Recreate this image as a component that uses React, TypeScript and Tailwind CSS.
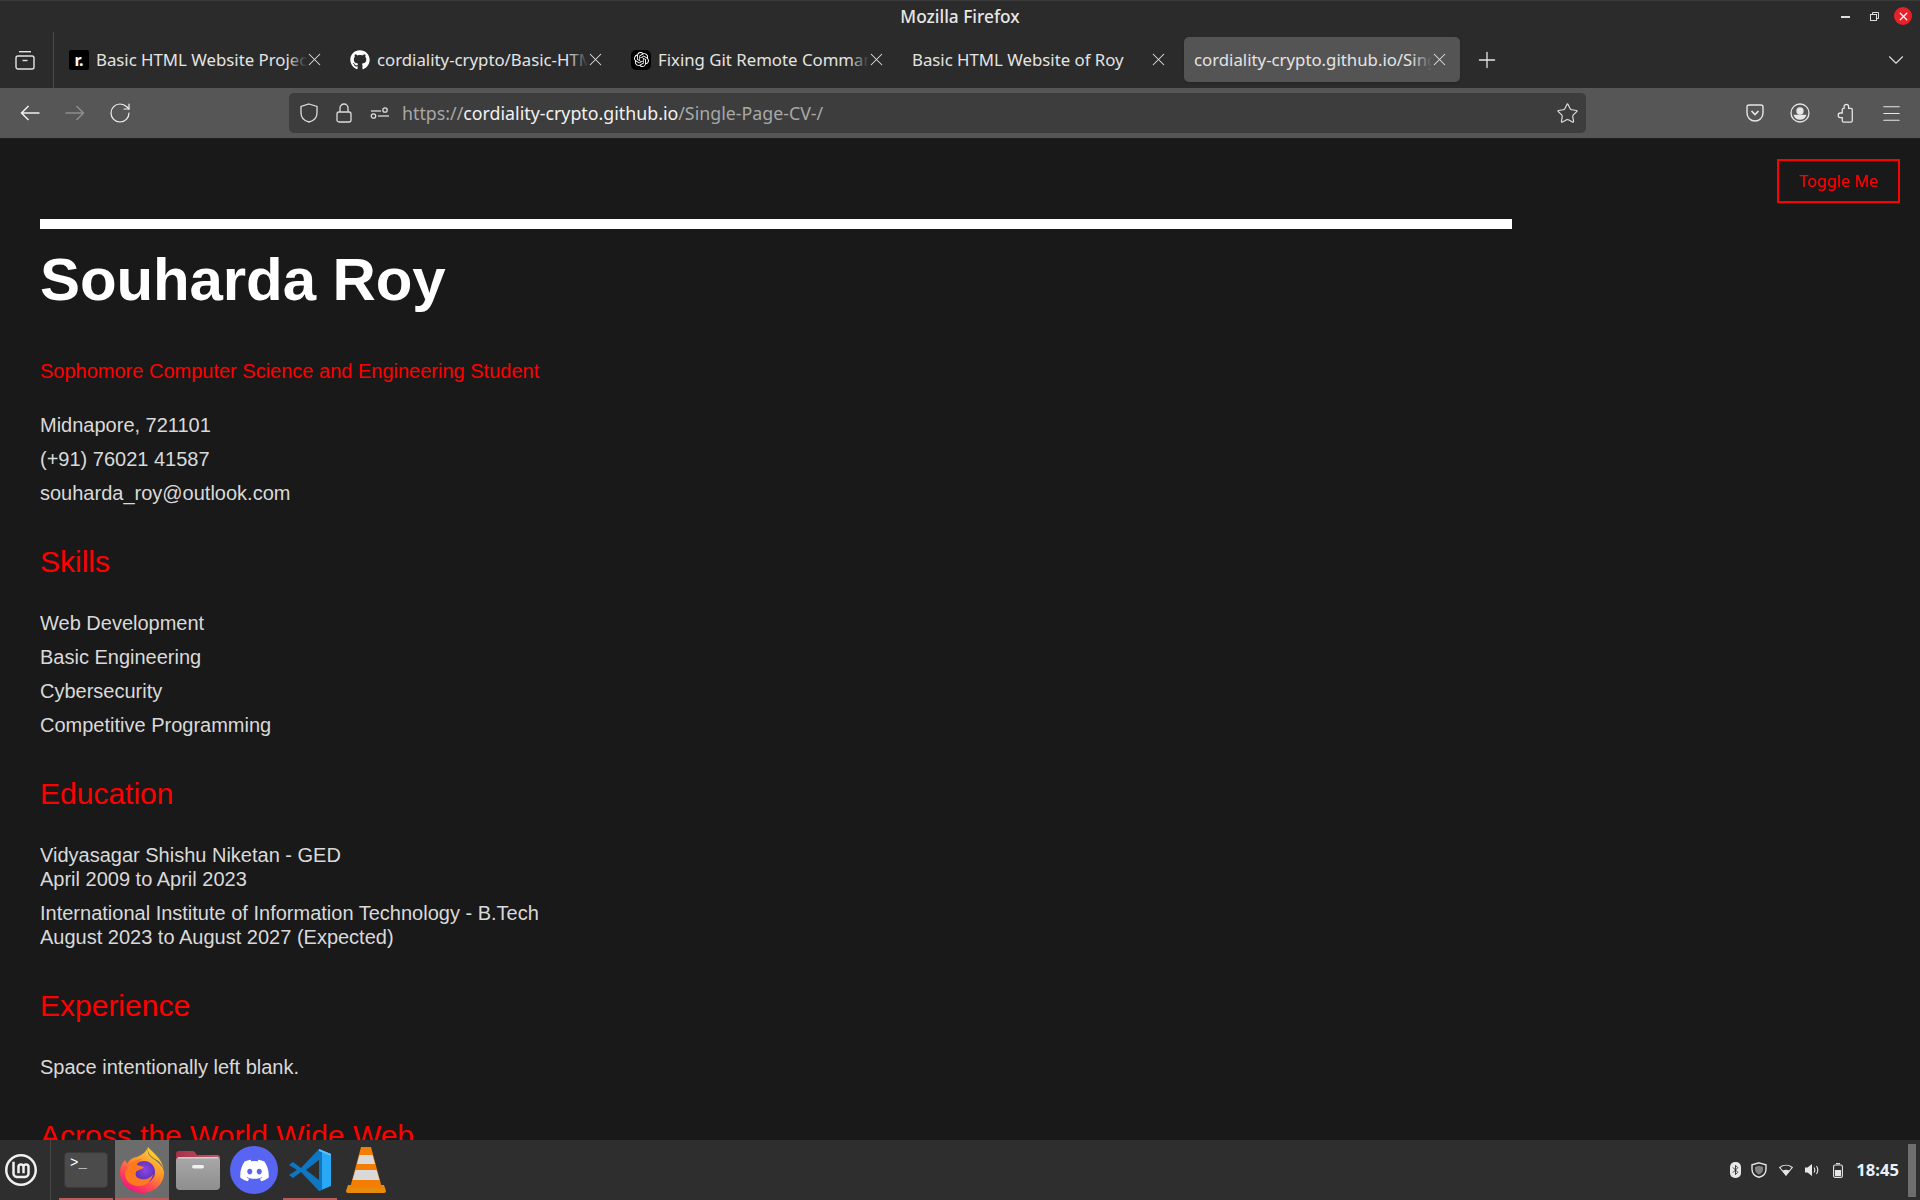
import React from "react";
import { FaGithub, FaDiscord } from "react-icons/fa";
import { SiLinuxmint, SiOpenai } from "react-icons/si";
import { RotateCw, Star, Menu, X, Plus, ChevronDown, Bluetooth } from "lucide-react";

const ui = "font-['Noto_Sans','Open_Sans',sans-serif]";

function Tab({ icon, title, active, width, fade }: { icon?: React.ReactNode; title: string; active?: boolean; width: number; fade?: boolean }) {
  return (
    <div className={`relative flex h-[45px] shrink-0 items-center rounded-[5px] pl-[10px] ${active ? "bg-[#545454] pr-[10px] shadow-sm" : "pr-[13px]"}`} style={{ width }}>
      {icon && <div className="mr-[7px] flex h-5 w-5 shrink-0 items-center justify-center">{icon}</div>}
      <div className="relative min-w-0 flex-1 overflow-hidden whitespace-nowrap text-[16.8px] leading-6 text-[#e4e4e4]">
        {title}
        {fade && <div className={`absolute right-0 top-0 h-full w-5 bg-gradient-to-r from-transparent ${active ? "to-[#545454]" : "to-[#2b2b2b]"}`} />}
      </div>
      <X className="ml-[-3px] h-[21px] w-[21px] shrink-0 text-[#e0e0e0]" strokeWidth={1.2} />
    </div>
  );
}

function Firefox() {
  return (
    <svg viewBox="0 0 44 46" className="h-[46px] w-[44px]">
      <defs>
        <linearGradient id="ff1" x1="0.85" y1="0" x2="0.25" y2="1">
          <stop offset="0" stopColor="#ffe13f" />
          <stop offset="0.45" stopColor="#ff8f2a" />
          <stop offset="0.78" stopColor="#ff3b5c" />
          <stop offset="1" stopColor="#e31587" />
        </linearGradient>
        <radialGradient id="ff2" cx="0.55" cy="0.4" r="0.65">
          <stop offset="0" stopColor="#8a47e8" />
          <stop offset="1" stopColor="#4f2aa8" />
        </radialGradient>
      </defs>
      <path d="M28 0c-1 4 0 8 4 11 7 5 12 9 12 15 0 11-10 20-22 20S0 37 0 26c0-6 2-10 5-13l2 4c2-4 6-7 10-7 4-2 9-4 11-10z" fill="url(#ff1)" />
      <circle cx="24" cy="25" r="11" fill="url(#ff2)" />
      <path d="M8 21c2-6 8-9 14-9-3 2-5 4-5 6l7 2c-2 3-6 2-8 5-1 3 0 6 5 7 5 1 10-1 12-5-1 7-7 12-14 12C10 39 5 33 5 27c0-2 1-4 3-6z" fill="#ff7a1f" />
      <path d="M28 0c4 5 16 12 16 26 0-6-3-11-9-14-5-3-8-7-7-12z" fill="#ffc72e" />
    </svg>
  );
}

function Folder() {
  return (
    <svg viewBox="0 0 44 40" className="h-[40px] w-[44px]">
      <defs>
        <linearGradient id="fo" x1="0" y1="0" x2="1" y2="0">
          <stop offset="0" stopColor="#a83048" />
          <stop offset="1" stopColor="#c2566a" />
        </linearGradient>
        <linearGradient id="fb" x1="0" y1="0" x2="0" y2="1">
          <stop offset="0" stopColor="#a8a8a8" />
          <stop offset="1" stopColor="#8e8e8e" />
        </linearGradient>
      </defs>
      <path d="M0 4a3 3 0 0 1 3-3h13c2 0 3 1 4 3l1 1h20a3 3 0 0 1 3 3v8H0z" fill="url(#fo)" />
      <rect x="0" y="7" width="44" height="33" rx="4" fill="url(#fb)" />
      <rect x="2" y="7" width="40" height="1.5" fill="#cfcfcf" />
      <rect x="16" y="15" width="12" height="3.5" rx="1.700" fill="#f0f0f0" />
    </svg>
  );
}

function VSCode() {
  return (
    <svg viewBox="0 0 42 42" className="h-[42px] w-[42px]">
      <path d="M30 0 42 5v32l-12 5z" fill="#28a8f5" />
      <path d="M30 0 12 19 4 13l-4 3 8 5-8 5 4 3 8-6 18 19 3-1V1z" fill="#0d77c4" />
      <path d="M30 11 17 21l13 10z" fill="#2e2e2e" />
      <path d="M30 0 42 5v2L30 2z" fill="#5cc1f7" />
    </svg>
  );
}

function Vlc() {
  return (
    <svg viewBox="0 0 40 46" className="h-[46px] w-[40px]">
      <path d="M2 38h36l2 6a2 2 0 0 1-2 2H2a2 2 0 0 1-2-2z" fill="#e88a0c" />
      <path d="M15 0h10l11 41H4z" fill="#f47d03" />
      <path d="M13.500 8h13l2.500 9H11z" fill="#d9d9d9" />
      <path d="M9.500 23h21l3 10H6.500z" fill="#d9d9d9" />
    </svg>
  );
}

function TaskItem({ children, active, running }: { children: React.ReactNode; active?: boolean; running?: boolean }) {
  return (
    <div className={`relative flex h-[60px] w-[54px] items-center justify-center ${active ? "bg-[#6c6c6c]" : ""}`}>
      {children}
      {running && <div className="absolute bottom-0 left-0 h-[2px] w-full bg-[#b85c5c]" />}
    </div>
  );
}

function Row({ children }: { children: React.ReactNode }) {
  return <p className="mb-[10px] text-[20px] leading-[24px] text-[#d9d9d9]">{children}</p>;
}

function H2({ children }: { children: React.ReactNode }) {
  return <h2 className="mt-[39px] mb-[31px] text-[30px] leading-[36px] text-[#ff0000]">{children}</h2>;
}

export default function App() {
  return (
    <div className="flex h-[1200px] w-[1920px] flex-col overflow-hidden bg-[#191919]">
      <header className={`flex h-[88px] shrink-0 flex-col bg-[#2b2b2b] ${ui}`}>
        <div className="relative flex h-[37px] items-center justify-center border-t border-[#3a3a3a] pb-[4px]">
          <span className="text-[17.3px] font-medium leading-6 text-[#e6e6e6]">Mozilla Firefox</span>
          <div className="absolute right-[8px] top-[6px] flex items-center">
            <div className="h-[1.5px] w-[9px] translate-y-[1px] bg-[#dddddd]" />
            <svg viewBox="0 0 9 9" className="ml-[20px] h-[9px] w-[9px]" fill="none" stroke="#dddddd"><rect x="0.500" y="2.500" width="6" height="6" /><path d="M2.500 2V.500h6V6.500H7" /></svg>
            <div className="ml-[15px] flex h-[18px] w-[18px] items-center justify-center rounded-full bg-[#e8202a]">
              <X className="h-[13px] w-[13px] text-white" strokeWidth={2.4} />
            </div>
          </div>
        </div>
        <div className="flex h-[51px] items-start">
          <div className="mt-[-5px] flex h-[56px] w-[54px] shrink-0 items-center justify-center border-r border-[#4a4a4a] pr-[4px]">
            <svg viewBox="0 0 20 20" className="h-[20px] w-[20px]" fill="none" stroke="#e4e4e4" strokeWidth="1.4"><path d="M4 1.700h12" /><rect x="1" y="6" width="18" height="13" rx="2" /><path d="M7.500 10.500h5" /></svg>
          </div>
          <div className="ml-[5px] flex gap-[2px]">
            <Tab width={279} fade title="Basic HTML Website Project" icon={<div className="flex h-5 w-5 items-center justify-center rounded-[2px] bg-black"><span className="text-[16px] font-bold leading-none text-white">r.</span></div>} />
            <Tab width={279} fade title="cordiality-crypto/Basic-HTML" icon={<FaGithub className="h-5 w-5 text-white" />} />
            <Tab width={279} fade title="Fixing Git Remote Commands" icon={<div className="flex h-5 w-5 items-center justify-center rounded-[5px] bg-black"><SiOpenai className="h-[15px] w-[15px] text-white" /></div>} />
            <Tab width={280} title="Basic HTML Website of Roy" />
            <Tab width={276} active fade title="cordiality-crypto.github.io/Single" />
          </div>
          <div className="flex h-[45px] w-[54px] items-center justify-center">
            <Plus className="h-[26px] w-[26px] text-[#e6e6e6]" strokeWidth={1.2} />
          </div>
          <div className="ml-auto mr-[11px] flex h-[45px] w-[26px] items-center justify-center">
            <ChevronDown className="h-[30px] w-[30px] text-[#e0e0e0]" strokeWidth={1} />
          </div>
        </div>
      </header>

      <nav className={`flex h-[51px] shrink-0 items-center border-b border-[#1f1f1f] bg-[#565656] ${ui}`}>
        <div className="flex w-[289px] shrink-0 items-center gap-[22px] pl-[20px]">
          <svg viewBox="0 0 20 16" className="h-[16px] w-[20px]" fill="none" stroke="#f0f0f0" strokeWidth="1.5"><path d="M1.500 8h18M8.500 1 1.500 8l7 7" /></svg>
          <svg viewBox="0 0 20 16" className="ml-[3px] h-[16px] w-[20px]" fill="none" stroke="#8e8e8e" strokeWidth="1.5"><path d="M.500 8h18M11.500 1l7 7-7 7" /></svg>
          <RotateCw className="ml-[1px] h-[24px] w-[24px] text-[#f0f0f0]" strokeWidth={1.2} />
        </div>
        <div className="flex h-[40px] w-[1297px] items-center rounded-[5px] bg-[#3d3d3d] pl-[11px] pr-[7px]">
          <svg viewBox="0 0 18 20" className="h-[20px] w-[18px]" fill="none" stroke="#dcdcdc" strokeWidth="1.3"><path d="M9 1l8 2.500V10c0 5-4 8-8 9-4-1-8-4-8-9V3.500z" /></svg>
          <svg viewBox="0 0 16 20" className="ml-[18px] h-[20px] w-[16px]" fill="none" stroke="#dcdcdc" strokeWidth="1.3"><rect x="1" y="9" width="14" height="10" rx="2" /><path d="M4 9V5a4 4 0 0 1 8 0v4" /></svg>
          <svg viewBox="0 0 19 12" className="ml-[18px] h-[12px] w-[19px]" fill="none" stroke="#dcdcdc" strokeWidth="1.3"><circle cx="15" cy="3" r="2.200" /><path d="M1 4h10" /><circle cx="3.500" cy="9" r="2.200" /><path d="M8 9h11" /></svg>
          <div className="ml-[13px] text-[17.8px] leading-6 text-[#a8a8a8]">https://<span className="text-[#f2f2f2]">cordiality-crypto.github.io</span>/Single-Page-CV-/</div>
          <Star className="ml-auto h-[23px] w-[23px] text-[#e0e0e0]" strokeWidth={1.2} />
        </div>
        <div className="ml-[159px] flex items-center gap-[25px]">
          <svg viewBox="0 0 20 20" className="h-[20px] w-[20px]" fill="none" stroke="#e6e6e6" strokeWidth="1.4"><path d="M2 4a2 2 0 0 1 2-2h12a2 2 0 0 1 2 2v6a8 8 0 0 1-16 0z" /><path d="M6.500 8 10 11.500 13.500 8" strokeWidth="1.700" /></svg>
          <svg viewBox="0 0 20 20" className="h-[20px] w-[20px]" fill="none" stroke="#e6e6e6" strokeWidth="1.3"><circle cx="10" cy="10" r="9" /><circle cx="10" cy="8" r="3" fill="#e6e6e6" /><path d="M4.500 12.500h11c-.8 2.200-3 3.500-5.500 3.500s-4.700-1.300-5.500-3.500z" fill="#e6e6e6" /></svg>
          <svg viewBox="0 0 20 22" className="h-[20px] w-[20px]" fill="none" stroke="#e6e6e6" strokeWidth="1.4"><path d="M11.500 1.500A2.500 2.500 0 0 1 14 4v2h2.500A1.500 1.500 0 0 1 18 7.500v12a1.500 1.500 0 0 1-1.500 1.500h-8A1.500 1.500 0 0 1 7 19.500V16H5a2.500 2.500 0 0 1 0-5h2V7.500A1.500 1.500 0 0 1 8.500 6H9V4a2.500 2.500 0 0 1 2.500-2.500z" /></svg>
          <Menu className="h-[23px] w-[23px] text-[#e6e6e6]" strokeWidth={1.2} />
        </div>
      </nav>

      <main className="relative min-h-0 flex-1 overflow-hidden pl-[40px] pt-[80px] font-['Liberation_Sans',Arial,sans-serif]">
        <button className={`absolute right-[20px] top-[20px] h-[44px] w-[123px] border-2 border-[#ff0000] text-[16.2px] text-[#ff0000] ${ui}`}>Toggle Me</button>
        <div className="h-[10px] w-[1472px] bg-white" />
        <h1 className="mt-[15px] text-[60px] font-bold leading-[72px] tracking-[-0.1px] text-white">Souharda Roy</h1>
        <p className="mt-[43px] text-[20px] leading-[24px] text-[#ff0000]">Sophomore Computer Science and Engineering Student</p>
        <div className="mt-[30px]">
          <Row>Midnapore, 721101</Row>
          <Row>(+91) 76021 41587</Row>
          <Row>souharda_roy@outlook.com</Row>
        </div>
        <H2>Skills</H2>
        <Row>Web Development</Row>
        <Row>Basic Engineering</Row>
        <Row>Cybersecurity</Row>
        <Row>Competitive Programming</Row>
        <H2>Education</H2>
        <Row>Vidyasagar Shishu Niketan - GED<br />April 2009 to April 2023</Row>
        <Row>International Institute of Information Technology - B.Tech<br />August 2023 to August 2027 (Expected)</Row>
        <H2>Experience</H2>
        <Row>Space intentionally left blank.</Row>
        <H2>Across the World Wide Web</H2>
      </main>

      <footer className={`flex h-[60px] shrink-0 items-center bg-[#2e2e2e] ${ui}`}>
        <div className="flex h-full w-[51px] shrink-0 items-center justify-center border-r border-[#484848] pr-[8px]">
          <SiLinuxmint className="h-[32px] w-[32px] text-[#f0f0f0]" />
        </div>
        <div className="ml-[8px] flex items-center gap-[2px]">
          <TaskItem running>
            <div className="relative h-[36px] w-[44px] rounded-[4px] border border-[#3a3a3a] bg-[#4b4b4b]">
              <span className="absolute left-[5px] top-[2px] font-['Liberation_Mono',monospace] text-[14px] leading-[16px] text-white">&gt;_</span>
            </div>
          </TaskItem>
          <TaskItem active running><Firefox /></TaskItem>
          <TaskItem><Folder /></TaskItem>
          <TaskItem>
            <div className="flex h-[48px] w-[48px] items-center justify-center rounded-full bg-[#5865f2]">
              <FaDiscord className="h-[31px] w-[31px] text-white" />
            </div>
          </TaskItem>
          <TaskItem running><VSCode /></TaskItem>
          <TaskItem><Vlc /></TaskItem>
        </div>
        <div className="ml-auto flex items-center">
          <Bluetooth className="h-[16px] w-[11px] rounded-[5px] bg-[#e8e8e8] text-[#2e2e2e]" strokeWidth={2} />
          <svg viewBox="0 0 16 16" className="ml-[10px] h-[16px] w-[16px]" fill="none" stroke="#e6e6e6" strokeWidth="1.4"><path d="M8 .8l7 2v4.500c0 4-3 7-7 8-4-1-7-4-7-8V2.800z" /><path d="M8 3.800l4 1.200v2.500c0 2.500-2 4-4 5-2-1-4-2.500-4-5V5z" fill="#e6e6e6" stroke="none" opacity="0.45" /></svg>
          <svg viewBox="0 0 14 12" className="ml-[12px] h-[12px] w-[14px]" fill="none" stroke="#e6e6e6" strokeWidth="1.100"><path d="M.7 3.500C4.500.5 9.500.5 13.300 3.500L7 11z" /><path d="M4 7c2-1 4-1 6 0l-3 4z" fill="#e6e6e6" /></svg>
          <svg viewBox="0 0 14 14" className="ml-[12px] h-[14px] w-[14px]" fill="none" stroke="#e6e6e6"><path d="M0 4.500h2.500L7 1v12L2.500 9.500H0z" fill="#e6e6e6" stroke="none" /><path d="M9 4.500c1 1.500 1 3.500 0 5M11.500 3c1.600 2.500 1.600 5.500 0 8" strokeWidth="1.100" /></svg>
          <svg viewBox="0 0 10 15" className="ml-[14px] h-[15px] w-[10px]" fill="none" stroke="#e6e6e6" strokeWidth="1.100"><path d="M3 .6h4" /><rect x=".6" y="2" width="8.800" height="12.400" rx="1.500" /><rect x="2" y="7" width="6" height="6" fill="#e6e6e6" stroke="none" /></svg>
          <span className="ml-[13px] text-[16.6px] font-bold text-[#e8f1fa]">18:45</span>
          <div className="ml-[9px] mr-[4px] h-[53px] w-[8px] bg-[#6e6e6e]" />
        </div>
      </footer>
    </div>
  );
}
